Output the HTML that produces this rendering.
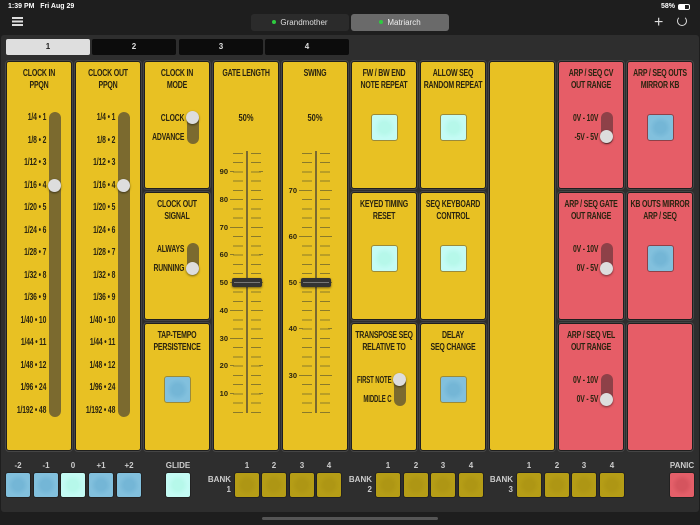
<!DOCTYPE html>
<html><head><meta charset="utf-8"><style>
*{margin:0;padding:0;box-sizing:border-box}
body{width:700px;height:525px;background:#1e1e1e;position:relative;overflow:hidden;font-family:"Liberation Sans Narrow","Liberation Sans",sans-serif;color:#2a2410}
.a{position:absolute}
.st{font-family:"Liberation Sans",sans-serif;color:#fff;font-size:7px;font-weight:bold}
.seg{position:absolute;top:14px;height:17px;width:98px;border-radius:3px;color:#ddd;font:8px "Liberation Sans",sans-serif;text-align:center;line-height:17px}
.seg i{display:inline-block;width:4px;height:4px;border-radius:50%;background:#2ecc40;margin-right:4px;vertical-align:1px}
.panel{position:absolute;left:1px;top:35px;width:698px;height:477px;background:#2e2e2e;border-radius:3px}
.tab{position:absolute;top:39px;height:16px;width:84px;background:#0c0c0c;border-radius:2px;color:#ddd;font-weight:bold;font-size:8px;text-align:center;line-height:16px}
.c{position:absolute;background:#e8c123;border:1px solid #1f1f1f;border-radius:3px;outline:1px solid #454545}
.r{background:#e65d67}
.t{position:absolute;left:-20px;right:-20px;top:6px;text-align:center;font-weight:bold;font-size:10px;line-height:12px;letter-spacing:-.3px;transform:scaleX(.7);white-space:nowrap}
.lb{position:absolute;font-weight:bold;font-size:10px;text-align:right;transform:scaleX(.68);transform-origin:right center;white-space:nowrap;line-height:10px;letter-spacing:-.2px}
.trk{position:absolute;width:12px;border-radius:6px;background:#7b6a2f}
.rt{background:#8e4148}
.kn{position:absolute;width:13px;height:13px;border-radius:50%;background:#ddd;box-shadow:0 1px 2px rgba(0,0,0,.5)}
.btn{position:absolute;width:27px;height:27px;border-radius:3px;border:1px solid #9a8a3a}
.cy{background:radial-gradient(circle,#b6f8ea 30%,#c4fbf4 60%)}
.bl{background:radial-gradient(circle,#74b6d6 30%,#82c0dd 60%)}
.rb{border-color:#8e4148}
.fl{position:absolute;width:2px;background:#7b6a2f}
.tk{position:absolute;width:10px;background:repeating-linear-gradient(to bottom,#8a7a2a 0,#8a7a2a 1px,transparent 1px,transparent 9.25px)}
.lt{position:absolute;height:1px;width:4px;background:#8a7a2a}
.fn{position:absolute;font-size:7.5px;font-weight:bold;text-align:right;width:14px;line-height:8px}
.th{position:absolute;width:30px;height:9px;border-radius:2px;background:#333;box-shadow:0 1px 2px rgba(0,0,0,.5)}
.th:after{content:"";position:absolute;left:2px;right:2px;top:4px;height:1px;background:#777}
.pd{position:absolute;top:472px;width:26px;height:26px;border-radius:3px;border:1px solid #222}
.pl{position:absolute;top:461px;color:#ccc;font-size:8px;font-weight:bold;width:26px;text-align:center}
.y{background:radial-gradient(circle,#ae9614 30%,#b59d16 60%)}
.bk{position:absolute;color:#ccc;font-size:8px;font-weight:bold;text-align:right;width:24px;line-height:10px}
</style></head><body>
<div class="a st" style="left:8px;top:3px">1:39 PM&nbsp;&nbsp; Fri Aug 29</div>
<div class="a st" style="left:661px;top:3px">58%</div>
<div class="a" style="left:678px;top:4px;width:12px;height:6px;border:1px solid #fff;border-radius:2px"><div style="width:6px;height:4px;background:#fff"></div></div>
<div class="a" style="left:12px;top:17px;width:11px;height:1.5px;background:#ddd;box-shadow:0 3.5px 0 #ddd,0 7px 0 #ddd"></div>
<div class="seg" style="left:251px;background:#2b2b2b"><i></i>Grandmother</div>
<div class="seg" style="left:351px;background:#6a6a6a;color:#eee"><i></i>Matriarch</div>
<div class="a" style="left:654px;top:14px;color:#ddd;font:16px 'Liberation Sans',sans-serif">+</div>
<div class="a" style="left:677px;top:16px;width:10px;height:10px;border:1.5px solid #ddd;border-top-color:transparent;border-radius:50%"></div>
<div class="panel"></div>
<div class="tab" style="left:6px;background:#dedede;color:#222">1</div>
<div class="tab" style="left:92px">2</div>
<div class="tab" style="left:179px">3</div>
<div class="tab" style="left:265px">4</div>

<div class="c" style="left:6px;top:61px;width:66px;height:390px"><div class="t">CLOCK IN<br>PPQN</div></div>
<div class="c" style="left:75px;top:61px;width:66px;height:390px"><div class="t">CLOCK OUT<br>PPQN</div></div>
<div class="trk" style="left:49px;top:112px;height:305px"></div>
<div class="trk" style="left:118px;top:112px;height:305px"></div>
<div class="kn" style="left:48px;top:179px"></div>
<div class="kn" style="left:117px;top:179px"></div>
<div class="lb" style="right:654px;top:107px;line-height:22.5px">1/4 • 1<br>1/8 • 2<br>1/12 • 3<br>1/16 • 4<br>1/20 • 5<br>1/24 • 6<br>1/28 • 7<br>1/32 • 8<br>1/36 • 9<br>1/40 • 10<br>1/44 • 11<br>1/48 • 12<br>1/96 • 24<br>1/192 • 48</div>
<div class="lb" style="right:585px;top:107px;line-height:22.5px">1/4 • 1<br>1/8 • 2<br>1/12 • 3<br>1/16 • 4<br>1/20 • 5<br>1/24 • 6<br>1/28 • 7<br>1/32 • 8<br>1/36 • 9<br>1/40 • 10<br>1/44 • 11<br>1/48 • 12<br>1/96 • 24<br>1/192 • 48</div>

<div class="c" style="left:144px;top:61px;width:66px;height:128px"><div class="t">CLOCK IN<br>MODE</div></div>
<div class="trk" style="left:187px;top:112px;height:32px"></div><div class="kn" style="left:186px;top:111px"></div>
<div class="lb" style="right:516px;top:109px;line-height:19px">CLOCK<br>ADVANCE</div>
<div class="c" style="left:144px;top:192px;width:66px;height:128px"><div class="t">CLOCK OUT<br>SIGNAL</div></div>
<div class="trk" style="left:187px;top:243px;height:32px"></div><div class="kn" style="left:186px;top:262px"></div>
<div class="lb" style="right:516px;top:240px;line-height:19px">ALWAYS<br>RUNNING</div>
<div class="c" style="left:144px;top:323px;width:66px;height:128px"><div class="t">TAP-TEMPO<br>PERSISTENCE</div></div>
<div class="btn bl" style="left:164px;top:376px"></div>

<div class="c" style="left:213px;top:61px;width:66px;height:390px"><div class="t">GATE LENGTH</div></div>
<div class="a" style="left:213px;width:66px;top:113px;text-align:center;font-weight:bold;font-size:10px;transform:scaleX(.75)">50%</div>
<div class="fl" style="left:246px;top:151px;height:262px"></div>
<div class="tk" style="left:233px;top:153px;height:262px"></div>
<div class="tk" style="left:251px;top:153px;height:262px"></div>
<div class="lt" style="left:230px;top:171px"></div><div class="lt" style="left:259px;top:171px"></div>
<div class="lt" style="left:230px;top:199px"></div><div class="lt" style="left:259px;top:199px"></div>
<div class="lt" style="left:230px;top:227px"></div><div class="lt" style="left:259px;top:227px"></div>
<div class="lt" style="left:230px;top:254px"></div><div class="lt" style="left:259px;top:254px"></div>
<div class="lt" style="left:230px;top:282px"></div><div class="lt" style="left:259px;top:282px"></div>
<div class="lt" style="left:230px;top:310px"></div><div class="lt" style="left:259px;top:310px"></div>
<div class="lt" style="left:230px;top:338px"></div><div class="lt" style="left:259px;top:338px"></div>
<div class="lt" style="left:230px;top:365px"></div><div class="lt" style="left:259px;top:365px"></div>
<div class="lt" style="left:230px;top:393px"></div><div class="lt" style="left:259px;top:393px"></div>
<div class="fn" style="left:214px;top:168px">90</div><div class="fn" style="left:214px;top:196px">80</div><div class="fn" style="left:214px;top:224px">70</div><div class="fn" style="left:214px;top:251px">60</div><div class="fn" style="left:214px;top:279px">50</div><div class="fn" style="left:214px;top:307px">40</div><div class="fn" style="left:214px;top:335px">30</div><div class="fn" style="left:214px;top:362px">20</div><div class="fn" style="left:214px;top:390px">10</div>
<div class="th" style="left:232px;top:278px"></div>

<div class="c" style="left:282px;top:61px;width:66px;height:390px"><div class="t">SWING</div></div>
<div class="a" style="left:282px;width:66px;top:113px;text-align:center;font-weight:bold;font-size:10px;transform:scaleX(.75)">50%</div>
<div class="fl" style="left:315px;top:151px;height:262px"></div>
<div class="tk" style="left:302px;top:153px;height:262px"></div>
<div class="tk" style="left:320px;top:153px;height:262px"></div>
<div class="lt" style="left:299px;top:190px"></div><div class="lt" style="left:328px;top:190px"></div>
<div class="lt" style="left:299px;top:236px"></div><div class="lt" style="left:328px;top:236px"></div>
<div class="lt" style="left:299px;top:282px"></div><div class="lt" style="left:328px;top:282px"></div>
<div class="lt" style="left:299px;top:328px"></div><div class="lt" style="left:328px;top:328px"></div>
<div class="lt" style="left:299px;top:375px"></div><div class="lt" style="left:328px;top:375px"></div>
<div class="fn" style="left:283px;top:187px">70</div><div class="fn" style="left:283px;top:233px">60</div><div class="fn" style="left:283px;top:279px">50</div><div class="fn" style="left:283px;top:325px">40</div><div class="fn" style="left:283px;top:372px">30</div>
<div class="th" style="left:301px;top:278px"></div>

<div class="c" style="left:351px;top:61px;width:66px;height:128px"><div class="t">FW / BW END<br>NOTE REPEAT</div></div>
<div class="btn cy" style="left:371px;top:114px"></div>
<div class="c" style="left:420px;top:61px;width:66px;height:128px"><div class="t">ALLOW SEQ<br>RANDOM REPEAT</div></div>
<div class="btn cy" style="left:440px;top:114px"></div>
<div class="c" style="left:351px;top:192px;width:66px;height:128px"><div class="t">KEYED TIMING<br>RESET</div></div>
<div class="btn cy" style="left:371px;top:245px"></div>
<div class="c" style="left:420px;top:192px;width:66px;height:128px"><div class="t">SEQ KEYBOARD<br>CONTROL</div></div>
<div class="btn cy" style="left:440px;top:245px"></div>
<div class="c" style="left:351px;top:323px;width:66px;height:128px"><div class="t">TRANSPOSE SEQ<br>RELATIVE TO</div></div>
<div class="trk" style="left:394px;top:374px;height:32px"></div><div class="kn" style="left:393px;top:373px"></div>
<div class="lb" style="right:309px;top:371px;line-height:19px;transform:scaleX(.6)">FIRST NOTE<br>MIDDLE C</div>
<div class="c" style="left:420px;top:323px;width:66px;height:128px"><div class="t">DELAY<br>SEQ CHANGE</div></div>
<div class="btn bl" style="left:440px;top:376px"></div>
<div class="c" style="left:489px;top:61px;width:66px;height:390px"></div>

<div class="c r" style="left:558px;top:61px;width:66px;height:128px"><div class="t">ARP / SEQ CV<br>OUT RANGE</div></div>
<div class="trk rt" style="left:601px;top:112px;height:32px"></div><div class="kn" style="left:600px;top:130px"></div>
<div class="lb" style="right:102px;top:109px;line-height:19px">0V - 10V<br>-5V - 5V</div>
<div class="c r" style="left:627px;top:61px;width:66px;height:128px"><div class="t">ARP / SEQ OUTS<br>MIRROR KB</div></div>
<div class="btn bl rb" style="left:647px;top:114px"></div>
<div class="c r" style="left:558px;top:192px;width:66px;height:128px"><div class="t">ARP / SEQ GATE<br>OUT RANGE</div></div>
<div class="trk rt" style="left:601px;top:243px;height:32px"></div><div class="kn" style="left:600px;top:262px"></div>
<div class="lb" style="right:102px;top:240px;line-height:19px">0V - 10V<br>0V - 5V</div>
<div class="c r" style="left:627px;top:192px;width:66px;height:128px"><div class="t">KB OUTS MIRROR<br>ARP / SEQ</div></div>
<div class="btn bl rb" style="left:647px;top:245px"></div>
<div class="c r" style="left:558px;top:323px;width:66px;height:128px"><div class="t">ARP / SEQ VEL<br>OUT RANGE</div></div>
<div class="trk rt" style="left:601px;top:374px;height:32px"></div><div class="kn" style="left:600px;top:393px"></div>
<div class="lb" style="right:102px;top:371px;line-height:19px">0V - 10V<br>0V - 5V</div>
<div class="c r" style="left:627px;top:323px;width:66px;height:128px"></div>

<div class="pl" style="left:5px">-2</div><div class="pd bl" style="left:5px"></div>
<div class="pl" style="left:33px">-1</div><div class="pd bl" style="left:33px"></div>
<div class="pl" style="left:60px">0</div><div class="pd cy" style="left:60px"></div>
<div class="pl" style="left:88px">+1</div><div class="pd bl" style="left:88px"></div>
<div class="pl" style="left:116px">+2</div><div class="pd bl" style="left:116px"></div>
<div class="pl" style="left:165px">GLIDE</div><div class="pd cy" style="left:165px"></div>
<div class="bk" style="left:207px;top:475px">BANK<br>1</div>
<div class="pl" style="left:234px">1</div><div class="pd y" style="left:234px"></div>
<div class="pl" style="left:261px">2</div><div class="pd y" style="left:261px"></div>
<div class="pl" style="left:289px">3</div><div class="pd y" style="left:289px"></div>
<div class="pl" style="left:316px">4</div><div class="pd y" style="left:316px"></div>
<div class="bk" style="left:348px;top:475px">BANK<br>2</div>
<div class="pl" style="left:375px">1</div><div class="pd y" style="left:375px"></div>
<div class="pl" style="left:403px">2</div><div class="pd y" style="left:403px"></div>
<div class="pl" style="left:430px">3</div><div class="pd y" style="left:430px"></div>
<div class="pl" style="left:458px">4</div><div class="pd y" style="left:458px"></div>
<div class="bk" style="left:489px;top:475px">BANK<br>3</div>
<div class="pl" style="left:516px">1</div><div class="pd y" style="left:516px"></div>
<div class="pl" style="left:544px">2</div><div class="pd y" style="left:544px"></div>
<div class="pl" style="left:571px">3</div><div class="pd y" style="left:571px"></div>
<div class="pl" style="left:599px">4</div><div class="pd y" style="left:599px"></div>
<div class="pl" style="left:667px;width:30px">PANIC</div><div class="pd" style="left:669px;background:radial-gradient(circle,#d5545e 30%,#e45f69 60%)"></div>
<div class="a" style="left:262px;top:517px;width:176px;height:3px;border-radius:2px;background:#555"></div>
</body></html>
